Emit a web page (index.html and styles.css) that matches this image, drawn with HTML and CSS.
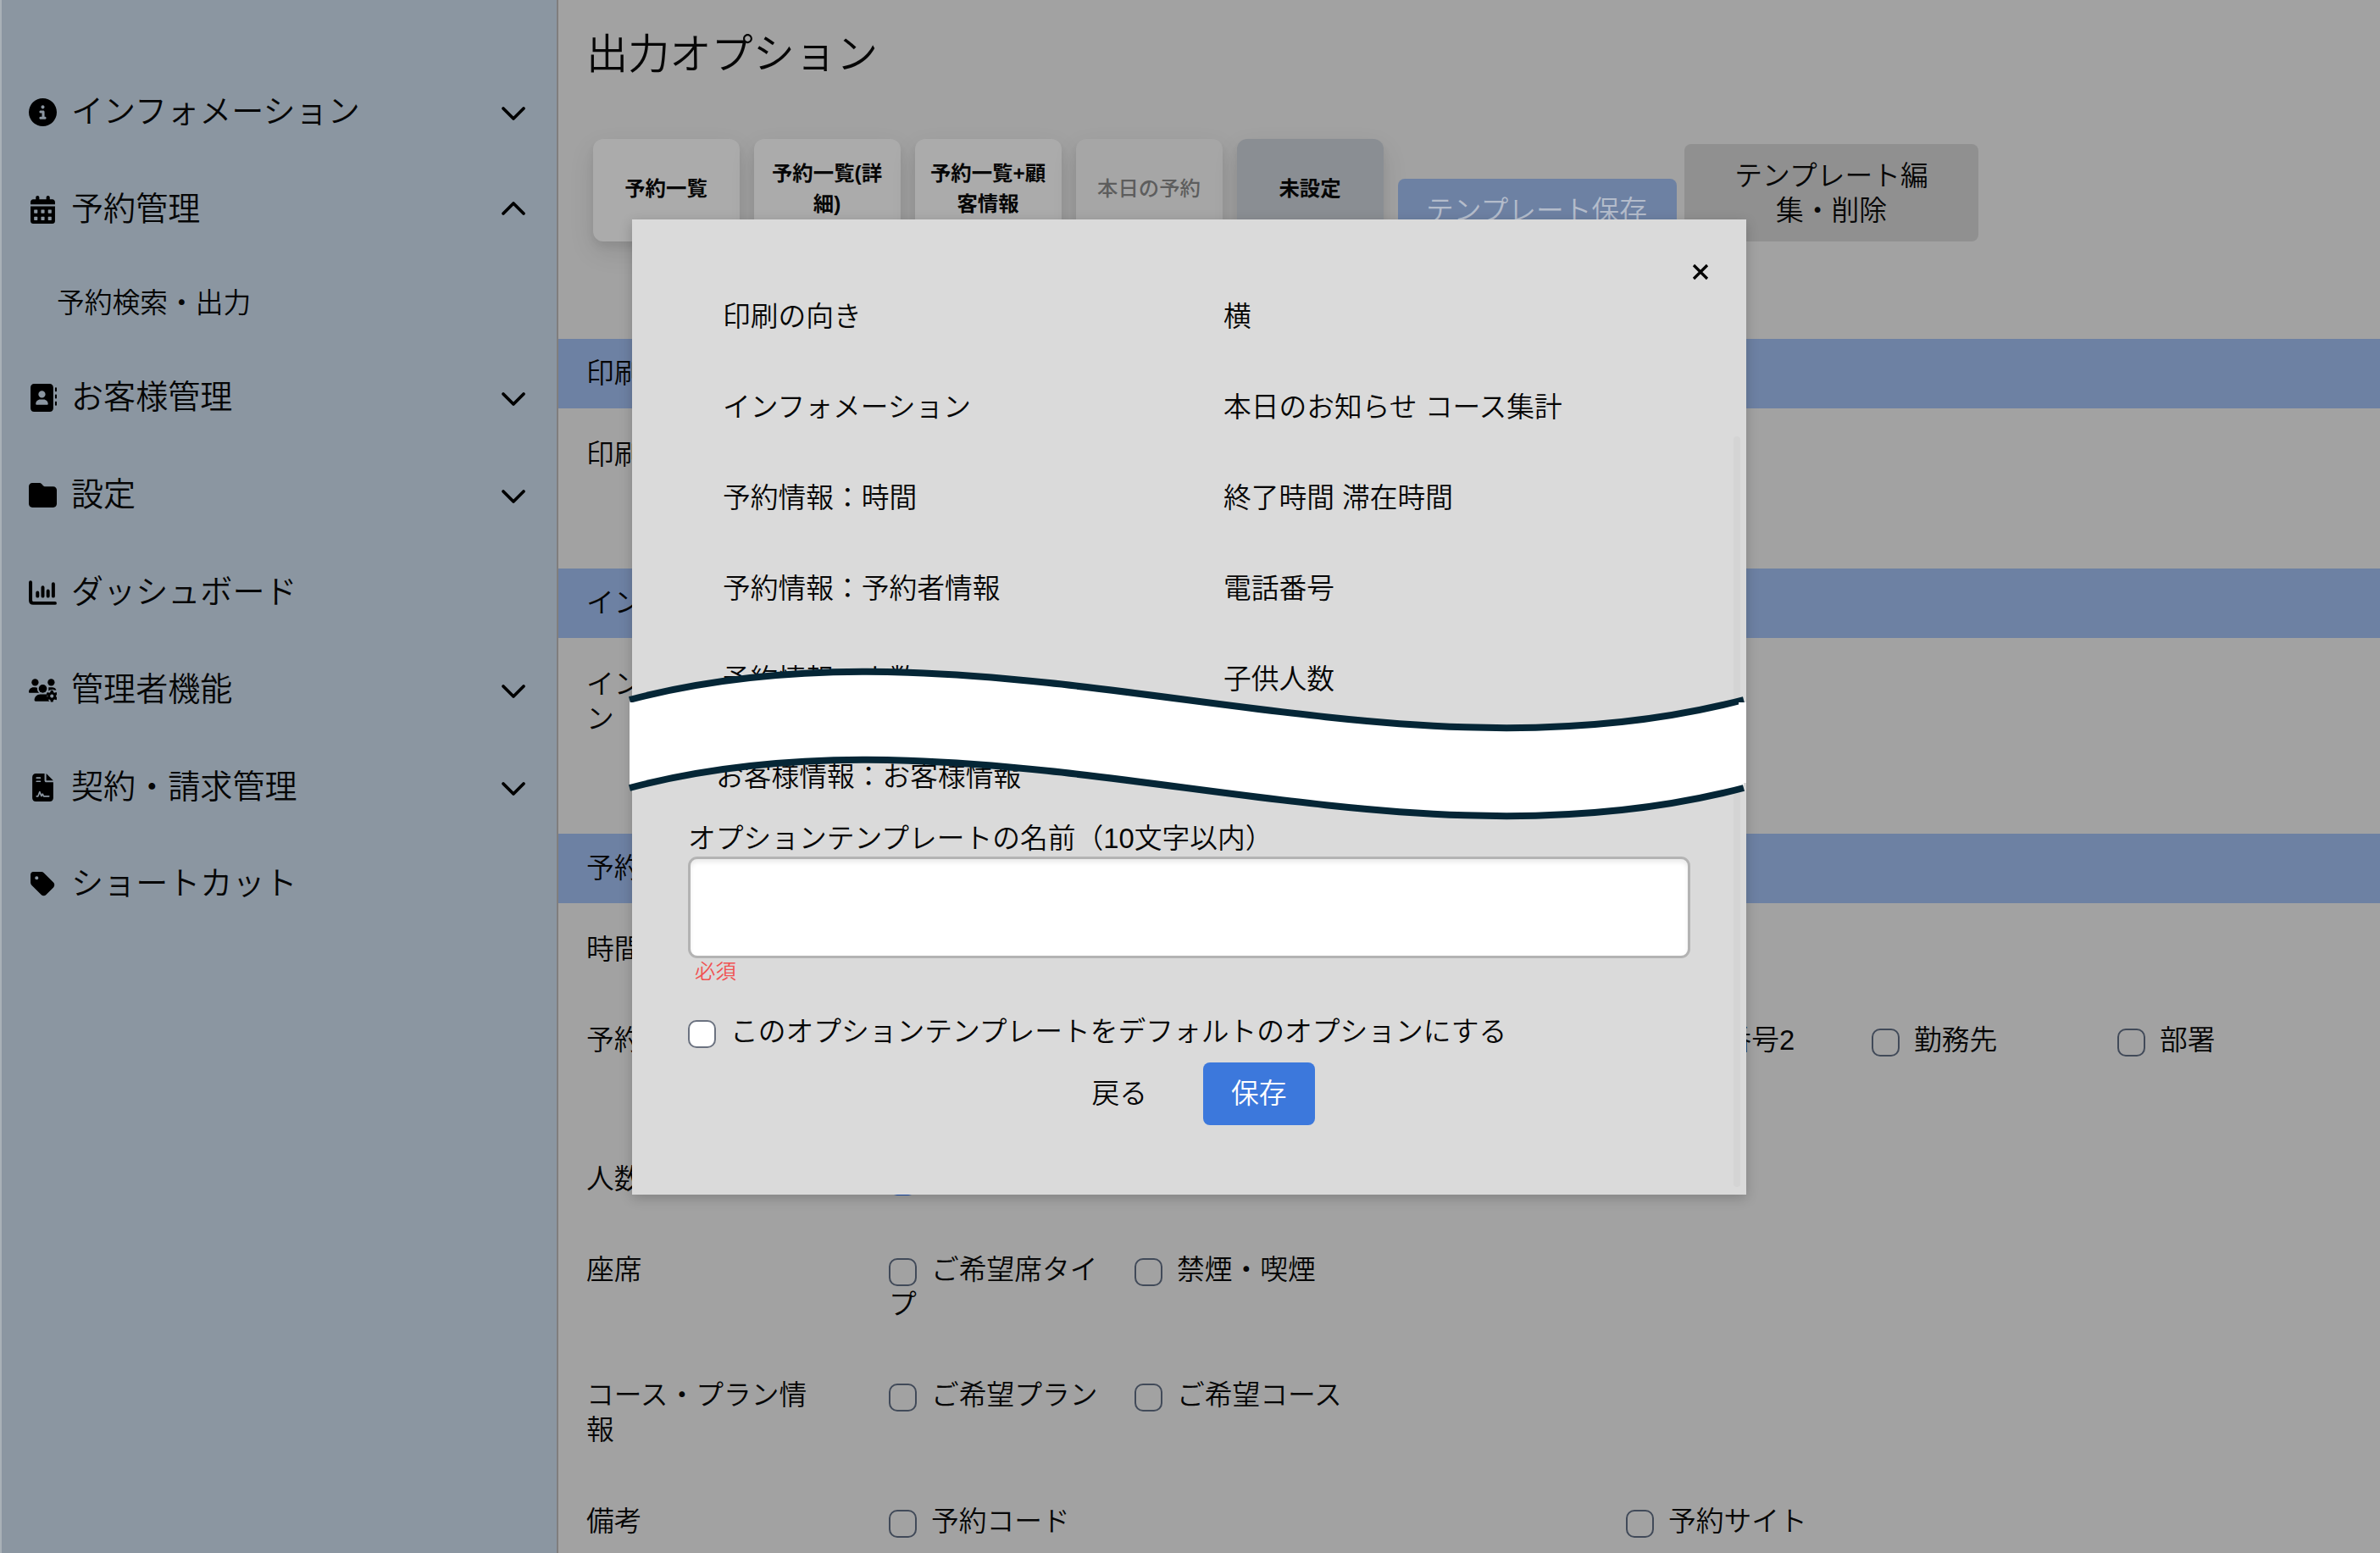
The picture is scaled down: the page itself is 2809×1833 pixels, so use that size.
FILE: index.html
```html
<!DOCTYPE html>
<html lang="ja">

<head>
    <meta charset="UTF-8">
    <meta name="viewport" content="width=device-width, initial-scale=1.0">
    <title>出力オプション</title>
    <link rel="stylesheet" href="styles.css">
</head>

<body>
    <nav class="sidebar">
        <div class="nav-item">
            <svg class="icon" viewBox="0 0 512 512"><path d="M256 512A256 256 0 1 0 256 0a256 256 0 1 0 0 512zM216 336h24V272H216c-13.3 0-24-10.7-24-24s10.7-24 24-24h48c13.3 0 24 10.7 24 24v88h8c13.3 0 24 10.7 24 24s-10.7 24-24 24H216c-13.3 0-24-10.7-24-24s10.7-24 24-24zm40-208a32 32 0 1 1 0 64 32 32 0 1 1 0-64z"/></svg>
            <span>インフォメーション</span>
            <svg class="chevron" viewBox="0 0 30 18"><path d="M3 3l12 12 12-12"/></svg>
        </div>
        <div class="nav-item">
            <svg class="icon" viewBox="-32 0 512 512"><path fill-rule="evenodd" d="M128 0c17.700 0 32 14.300 32 32V64H288V32c0-17.700 14.300-32 32-32s32 14.300 32 32V64h48c26.500 0 48 21.500 48 48v48H0V112C0 85.500 21.500 64 48 64H96V32c0-17.700 14.300-32 32-32zM0 192H448V464c0 26.500-21.500 48-48 48H48c-26.500 0-48-21.500-48-48V192zM64 264v48q0 8 8 8h48q8 0 8-8v-48q0-8-8-8h-48q-8 0-8 8zM192 264v48q0 8 8 8h48q8 0 8-8v-48q0-8-8-8h-48q-8 0-8 8zM320 264v48q0 8 8 8h48q8 0 8-8v-48q0-8-8-8h-48q-8 0-8 8zM64 392v48q0 8 8 8h48q8 0 8-8v-48q0-8-8-8h-48q-8 0-8 8zM192 392v48q0 8 8 8h48q8 0 8-8v-48q0-8-8-8h-48q-8 0-8 8zM320 392v48q0 8 8 8h48q8 0 8-8v-48q0-8-8-8h-48q-8 0-8 8z"/></svg>
            <span>予約管理</span>
            <svg class="chevron up" viewBox="0 0 30 18"><path d="M3 3l12 12 12-12"/></svg>
        </div>
        <div class="nav-sub">予約検索・出力</div>
        <div class="nav-item">
            <svg class="icon" viewBox="0 0 512 512"><path fill-rule="evenodd" d="M96 0C60.700 0 32 28.700 32 64V448c0 35.300 28.700 64 64 64H384c35.300 0 64-28.700 64-64V64c0-35.300-28.700-64-64-64H96zM208 288h64c44.200 0 80 35.800 80 80 0 8.800-7.200 16-16 16H144c-8.800 0-16-7.200-16-16 0-44.200 35.800-80 80-80zM176 192a64 64 0 1 1 128 0 64 64 0 1 1 -128 0z"/><path d="M480 80c0-21 32-21 32 0v48c0 21-32 21-32 0zM480 208c0-21 32-21 32 0v48c0 21-32 21-32 0zM480 336c0-21 32-21 32 0v48c0 21-32 21-32 0z"/></svg>
            <span>お客様管理</span>
            <svg class="chevron" viewBox="0 0 30 18"><path d="M3 3l12 12 12-12"/></svg>
        </div>
        <div class="nav-item">
            <svg class="icon" viewBox="0 0 512 512"><path d="M64 480H448c35.300 0 64-28.700 64-64V160c0-35.300-28.700-64-64-64H288c-10.100 0-19.600-4.700-25.600-12.800L243.200 57.600C231.100 41.500 212.100 32 192 32H64C28.700 32 0 60.700 0 96V416c0 35.300 28.700 64 64 64z"/></svg>
            <span>設定</span>
            <svg class="chevron" viewBox="0 0 30 18"><path d="M3 3l12 12 12-12"/></svg>
        </div>
        <div class="nav-item">
            <svg class="icon line" viewBox="0 0 512 512"><path d="M32 64V400q0 48 48 48H480M160 256v64M256 160v160M352 224v96M448 96v224"/></svg>
            <span>ダッシュボード</span>
        </div>
        <div class="nav-item">
            <svg class="icon" viewBox="0 0 640 512"><circle cx="144" cy="80" r="80"/><circle cx="512" cy="80" r="80"/><circle cx="320" cy="224" r="94"/><path d="M0 298.700C0 239.800 47.800 192 106.700 192h42.700c16 0 31 3.500 44.600 9.700-9 51 10 92 45 118.300H21.300C9.600 320 0 310.400 0 298.700zM448 198c14-4 28-6 43-6h43c42 0 79 25 96 60l-30 10-50-22-60 10-40 26c4-30 5-50-2-78z"/><path d="M128 485c0-74 60-133 133-133h118c20 0 30 3 45 10-12 55 5 110 50 150H155c-15 0-27-12-27-27z"/><path fill-rule="evenodd" d="M502 260h52l10 44 24 14 43-14 26 45-33 30v28l33 30-26 45-43-14-24 14-10 44h-52l-10-44-24-14-43 14-26-45 33-30v-28l-33-30 26-45 43 14 24-14zM528 353a40 40 0 1 0 0 80 40 40 0 1 0 0-80z"/></svg>
            <span>管理者機能</span>
            <svg class="chevron" viewBox="0 0 30 18"><path d="M3 3l12 12 12-12"/></svg>
        </div>
        <div class="nav-item">
            <svg class="icon" viewBox="-64 0 512 512"><path d="M64 0C28.700 0 0 28.700 0 64V448c0 35.300 28.700 64 64 64H320c35.300 0 64-28.700 64-64V160H256c-17.700 0-32-14.300-32-32V0H64zM256 0V128H384L256 0z"/><path class="cut" d="M80 80h64M80 144h64M80 416h24l32-80 30 76 22-36 20 40h96"/></svg>
            <span>契約・請求管理</span>
            <svg class="chevron" viewBox="0 0 30 18"><path d="M3 3l12 12 12-12"/></svg>
        </div>
        <div class="nav-item">
            <svg class="icon" viewBox="-32 0 512 512"><path d="M0 80V229.500c0 17 6.700 33.300 18.700 45.300l176 176c25 25 65.500 25 90.500 0L418.700 317.300c25-25 25-65.500 0-90.500l-176-176c-12-12-28.300-18.700-45.300-18.700H48C21.500 32 0 53.500 0 80zm112 32a32 32 0 1 1 0 64 32 32 0 1 1 0-64z"/></svg>
            <span>ショートカット</span>
        </div>
    </nav>

    <main class="main">
        <h1>出力オプション</h1>
        <div class="templates">
            <button class="card">予約一覧</button>
            <button class="card">予約一覧(詳細)</button>
            <button class="card">予約一覧+顧客情報</button>
            <button class="card disabled">本日の予約</button>
            <button class="card selected">未設定</button>
            <button class="btn-save">テンプレート保存</button>
            <button class="btn-edit">テンプレート編集・削除</button>
        </div>

        <section>
            <h2>印刷</h2>
            <div class="row">
                <div class="label">印刷の向き</div>
            </div>
        </section>
        <section>
            <h2>インフォメーション</h2>
            <div class="row">
                <div class="label">インフォメーション</div>
            </div>
        </section>
        <section>
            <h2>予約情報</h2>
            <div class="row">
                <div class="label">時間</div>
            </div>
            <div class="row tall">
                <div class="label">予約者情報</div>
                <div class="options">
                    <label class="col4"><i class="check"></i>電話番号2</label>
                    <label><i class="check"></i>勤務先</label>
                    <label><i class="check"></i>部署</label>
                </div>
            </div>
            <div class="row">
                <div class="label">人数</div>
                <div class="options">
                    <label><i class="check checked"></i></label>
                </div>
            </div>
            <div class="row">
                <div class="label">座席</div>
                <div class="options">
                    <label><i class="check"></i>ご希望席タイプ</label>
                    <label><i class="check"></i>禁煙・喫煙</label>
                </div>
            </div>
            <div class="row">
                <div class="label">コース・プラン情報</div>
                <div class="options">
                    <label><i class="check"></i>ご希望プラン</label>
                    <label><i class="check"></i>ご希望コース</label>
                </div>
            </div>
            <div class="row">
                <div class="label">備考</div>
                <div class="options">
                    <label><i class="check"></i>予約コード</label>
                    <label class="col4"><i class="check"></i>予約サイト</label>
                </div>
            </div>
        </section>
    </main>

    <div class="modal">
        <svg class="close" viewBox="0 0 20 20"><path d="M2 2l16 16M18 2L2 18"/></svg>
        <div class="scrollbar"></div>
        <dl class="summary">
            <dt>印刷の向き</dt>
            <dd>横</dd>
            <dt>インフォメーション</dt>
            <dd>本日のお知らせ コース集計</dd>
            <dt>予約情報：時間</dt>
            <dd>終了時間 滞在時間</dd>
            <dt>予約情報：予約者情報</dt>
            <dd>電話番号</dd>
            <dt>予約情報：人数</dt>
            <dd>子供人数</dd>
        </dl>
        <div class="customer">お客様情報：お客様情報</div>
        <div class="name-label">オプションテンプレートの名前（10文字以内）</div>
        <input class="name-input" type="text">
        <div class="required">必須</div>
        <label class="default-option"><i class="check"></i>このオプションテンプレートをデフォルトのオプションにする</label>
        <div class="actions">
            <button class="back">戻る</button>
            <button class="save">保存</button>
        </div>
        <!-- wavy break across the middle of the dialog -->
        <svg class="wave" viewBox="0 0 1318 190">
            <path fill="#fff" d="M0 46C438-69 877 161 1315 46V150C877 265 438 35 0 150z"/>
            <path class="wave-line" d="M0 46C438-69 877 161 1315 46M0 150C438 35 877 265 1315 150"/>
            <path fill="#fff" d="M0 49H6V144H0zM1309 49H1318V144H1309z"/>
        </svg>
    </div>
</body>

</html>
```

FILE: styles.css
```css
* {
    margin: 0;
    padding: 0;
    box-sizing: border-box;
}

body {
    width: 2809px;
    height: 1833px;
    overflow: hidden;
    position: relative;
    display: flex;
    font-family: "Liberation Sans", "Noto Sans CJK JP", sans-serif;
    font-size: 32.75px;
    font-weight: 350;
    line-height: 41px;
    color: #060606;
    background-color: #a2a2a2;
}

button {
    border: none;
    font: inherit;
    color: inherit;
}

.sidebar {
    width: 659px;
    flex-shrink: 0;
    padding-top: 75px;
    background-color: #8b96a1;
    border-left: 2px solid #a9b1b7;
    border-right: 2px solid #807e7d;
}

.nav-item {
    height: 114.8px;
    padding: 0 36px 0 32px;
    display: flex;
    align-items: center;
    font-size: 38.1px;
}

.nav-item span {
    flex: 1;
    margin-left: 17px;
}

.nav-sub {
    height: 108px;
    padding-left: 65px;
    line-height: 105px;
}

.icon {
    width: 33px;
    height: 33px;
    fill: #000;
}

.icon.line {
    fill: none;
    stroke: #000;
    stroke-width: 62;
    stroke-linecap: round;
}

.cut {
    fill: none;
    stroke: #8b96a1;
    stroke-width: 26;
    stroke-linecap: round;
    stroke-linejoin: round;
}

.chevron {
    width: 30px;
    height: 18px;
    margin-top: 3px;
    fill: none;
    stroke: #000;
    stroke-width: 3.8;
    stroke-linecap: round;
    stroke-linejoin: round;
}

.chevron.up {
    transform: rotate(180deg);
    margin-top: -3px;
}

.main {
    flex: 1;
    border-right: 3px solid #e0e0e0;
}

h1 {
    height: 164px;
    padding: 34px 0 0 33px;
    font-size: 49.2px;
    font-weight: 350;
    line-height: 60px;
}

.templates {
    height: 236px;
    padding: 0 41px 115px;
    display: flex;
    align-items: flex-end;
}

.card {
    width: 173px;
    height: 121px;
    margin-right: 17px;
    padding: 0 17px 3px 16px;
    border-radius: 12px;
    background-color: #ababab;
    box-shadow: 0 12px 30px rgba(0, 0, 0, 0.1), 0 6px 10px rgba(0, 0, 0, 0.06);
    font-size: 24.4px;
    font-weight: bold;
    line-height: 36px;
}

.card.disabled {
    background-color: #a6a6a6;
    color: #5d5d5d;
    font-weight: 500;
}

.card.selected {
    background-color: #8a8e93;
}

.btn-save {
    width: 329px;
    height: 74px;
    margin-right: 9px;
    padding-right: 2px;
    border-radius: 8px;
    background-color: #6d81a3;
    color: #b4bccb;
}

.btn-edit {
    width: 347px;
    height: 115px;
    padding: 0 48px;
    border-radius: 8px;
    background-color: #909090;
}

section {
    margin-bottom: 82px;
}

h2 {
    height: 82px;
    padding-left: 33px;
    background-color: #6d81a3;
    font-size: 32.75px;
    font-weight: 350;
    line-height: 81px;
}

.row {
    padding: 34px 33px 32.3px;
    display: flex;
}

.row.tall {
    height: 164px;
}

.label {
    width: 280px;
    margin-right: 77px;
}

.options {
    display: grid;
    grid-template-columns: repeat(6, 290px);
    height: fit-content;
}

.options label {
    padding-right: 16px;
}

.options .col4 {
    grid-column: 4;
}

.check {
    display: inline-block;
    width: 33px;
    height: 33px;
    margin-right: 17px;
    border: 2.5px solid #414a59;
    border-radius: 10px;
    vertical-align: -8px;
}

.check.checked {
    background-color: #1a4fb0;
    border-color: #1a4fb0;
}

.modal {
    position: absolute;
    left: 746px;
    top: 259px;
    width: 1315px;
    height: 1151px;
    padding: 60.5px 66px 0;
    background-color: #dadada;
    box-shadow: 0 4px 14px rgba(0, 0, 0, 0.2);
}

.close {
    position: absolute;
    left: 1251px;
    top: 52px;
    width: 20px;
    height: 20px;
    stroke: #000;
    stroke-width: 3.2;
}

.scrollbar {
    position: absolute;
    right: 7px;
    top: 256px;
    width: 8px;
    height: 886px;
    border-radius: 4px;
    background-color: #d4d4d4;
}

.summary {
    padding-left: 41px;
    display: grid;
    grid-template-columns: 591px 1fr;
    grid-auto-rows: 107px;
    align-items: center;
}

.customer {
    margin-top: 41px;
    padding-left: 33px;
}

.name-label {
    margin-top: 32px;
}

.name-input {
    display: block;
    width: 1183px;
    height: 120px;
    margin-top: 1px;
    border: 3px solid #b3b3b3;
    border-radius: 11px;
    background-color: #fff;
    box-shadow: inset 0 4px 5px rgba(0, 0, 0, 0.08);
}

.required {
    padding-left: 8px;
    font-size: 24.4px;
    line-height: 32px;
    color: #f05252;
}

.default-option {
    display: block;
    margin-top: 34px;
}

.default-option .check {
    border-color: #6b7280;
    background-color: #fff;
}

.actions {
    margin-top: 16px;
    display: flex;
    justify-content: center;
    gap: 33px;
}

.back,
.save {
    height: 74px;
    padding: 0 33px;
    border-radius: 8px;
    background: none;
}

.save {
    background-color: #3c78dc;
    color: #fff;
}

.wave {
    position: absolute;
    left: -3px;
    top: 521px;
    width: 1318px;
    height: 190px;
    overflow: visible;
}

.wave-line {
    fill: none;
    stroke: #052636;
    stroke-width: 8;
}
```
